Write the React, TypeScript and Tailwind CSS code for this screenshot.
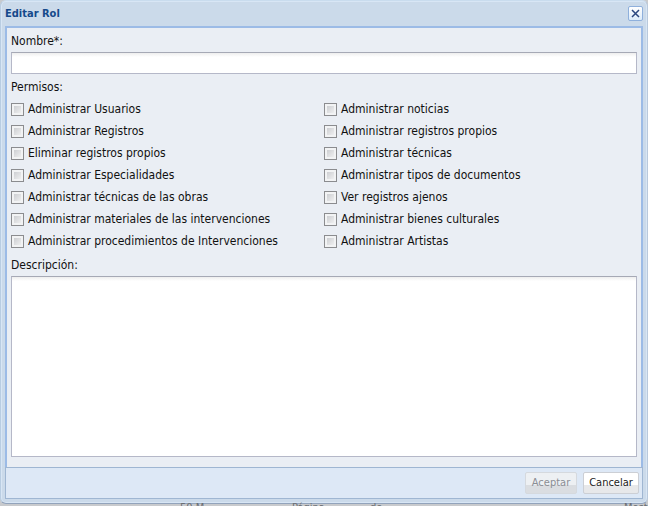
const leftPermissions = [
  'Administrar Usuarios',
  'Administrar Registros',
  'Eliminar registros propios',
  'Administrar Especialidades',
  'Administrar técnicas de las obras',
  'Administrar materiales de las intervenciones',
  'Administrar procedimientos de Intervenciones',
];

const rightPermissions = [
  'Administrar noticias',
  'Administrar registros propios',
  'Administrar técnicas',
  'Administrar tipos de documentos',
  'Ver registros ajenos',
  'Administrar bienes culturales',
  'Administrar Artistas',
];

function PermissionColumn({ items }: { items: string[] }) {
  return (
    <div>
      {items.map((item) => (
        <label key={item} className="flex h-[22px] items-center gap-1">
          <input
            type="checkbox"
            className="size-[13px] shrink-0 appearance-none border border-[#8b8c8f] bg-linear-to-br from-[#c4c6ca] to-[#f8f8f8] shadow-[inset_0_0_0_2px_#f2f3f4] checked:bg-[#4b6b9b]"
          />
          <span className="whitespace-nowrap">{item}</span>
        </label>
      ))}
    </div>
  );
}

export default function App() {
  return (
    <div className="h-screen overflow-hidden bg-[#c8cacd] font-['DejaVu_Sans_Condensed','Noto_Sans',sans-serif] text-[12px] leading-4 text-[#111111]">
      <section
        role="dialog"
        aria-labelledby="title"
        className="rounded-md border border-t-[#c9dcee] border-r-[#b9c9dc] border-b-[#92a3bb] border-l-[#b9cde2] bg-[#cbdaea] px-1 pb-1 shadow-[inset_0_0_0_1px_#d8e6f5]"
      >
        <header className="flex h-[25px] items-center justify-between">
          <h1 id="title" className="text-[11px] font-bold text-[#15498b]">
            Editar Rol
          </h1>
          <button
            type="button"
            aria-label="Cerrar"
            className="flex size-[15px] items-center justify-center rounded-xs border border-[#8fb0dc] bg-linear-to-b from-white to-[#dcebfa]"
          >
            <svg viewBox="0 0 9 9" className="size-[9px] shrink-0" stroke="#2b477f" strokeWidth="1.5">
              <path d="M1 1 8 8M8 1 1 8" />
            </svg>
          </button>
        </header>

        <form>
          <div className="border-2 border-b-0 border-[#9cbbe6] bg-[#eaeef4] px-1 pb-[10px]">
            <div className="pt-[5px]">
              <label htmlFor="nombre" className="block">
                Nombre*:
              </label>
            </div>
            <input
              id="nombre"
              type="text"
              className="mt-[3px] block h-[22px] w-full border border-[#b5b8c8] border-t-[#a6a9b5] bg-white bg-linear-to-b from-[#eeeeee] to-white to-20% px-1 outline-none"
            />
            <fieldset className="mt-[5px]">
              <legend>Permisos:</legend>
              <div className="mt-[3px] grid grid-cols-2">
                <PermissionColumn items={leftPermissions} />
                <PermissionColumn items={rightPermissions} />
              </div>
            </fieldset>
            <label htmlFor="descripcion" className="mt-[5px] block">
              Descripción:
            </label>
            <textarea
              id="descripcion"
              className="mt-[3px] block h-[181px] w-full resize-none border border-[#b5b8c8] border-t-[#a6a9b5] bg-white bg-linear-to-b from-[#eeeeee] to-white to-[4px] p-1 outline-none"
            />
          </div>
          <footer className="flex h-8 items-center justify-end gap-[6px] border border-[#9fb6d2] bg-[#dde8f6] pr-[3px] text-[11px]">
            <button
              type="button"
              disabled
              className="h-[22px] w-[52px] rounded-xs border border-[#d5d9de] bg-linear-to-b from-[#edf0f3] from-60% to-[#dadde1] to-60% text-[#8b8e94]"
            >
              Aceptar
            </button>
            <button
              type="button"
              className="h-[22px] w-14 rounded-xs border border-[#cccfd5] bg-linear-to-b from-white from-60% to-[#e7e8ea] to-60% text-[#222222]"
            >
              Cancelar
            </button>
          </footer>
        </form>
      </section>

      <div className="flex justify-between pl-[180px] text-[11px] leading-[8px] text-[#6b6e73]">
        <div className="flex">
          <span className="w-28">50 M</span>
          <span className="w-[78px]">Página</span>
          <span>de</span>
        </div>
        <span className="w-6">Mostrando</span>
      </div>
    </div>
  );
}
